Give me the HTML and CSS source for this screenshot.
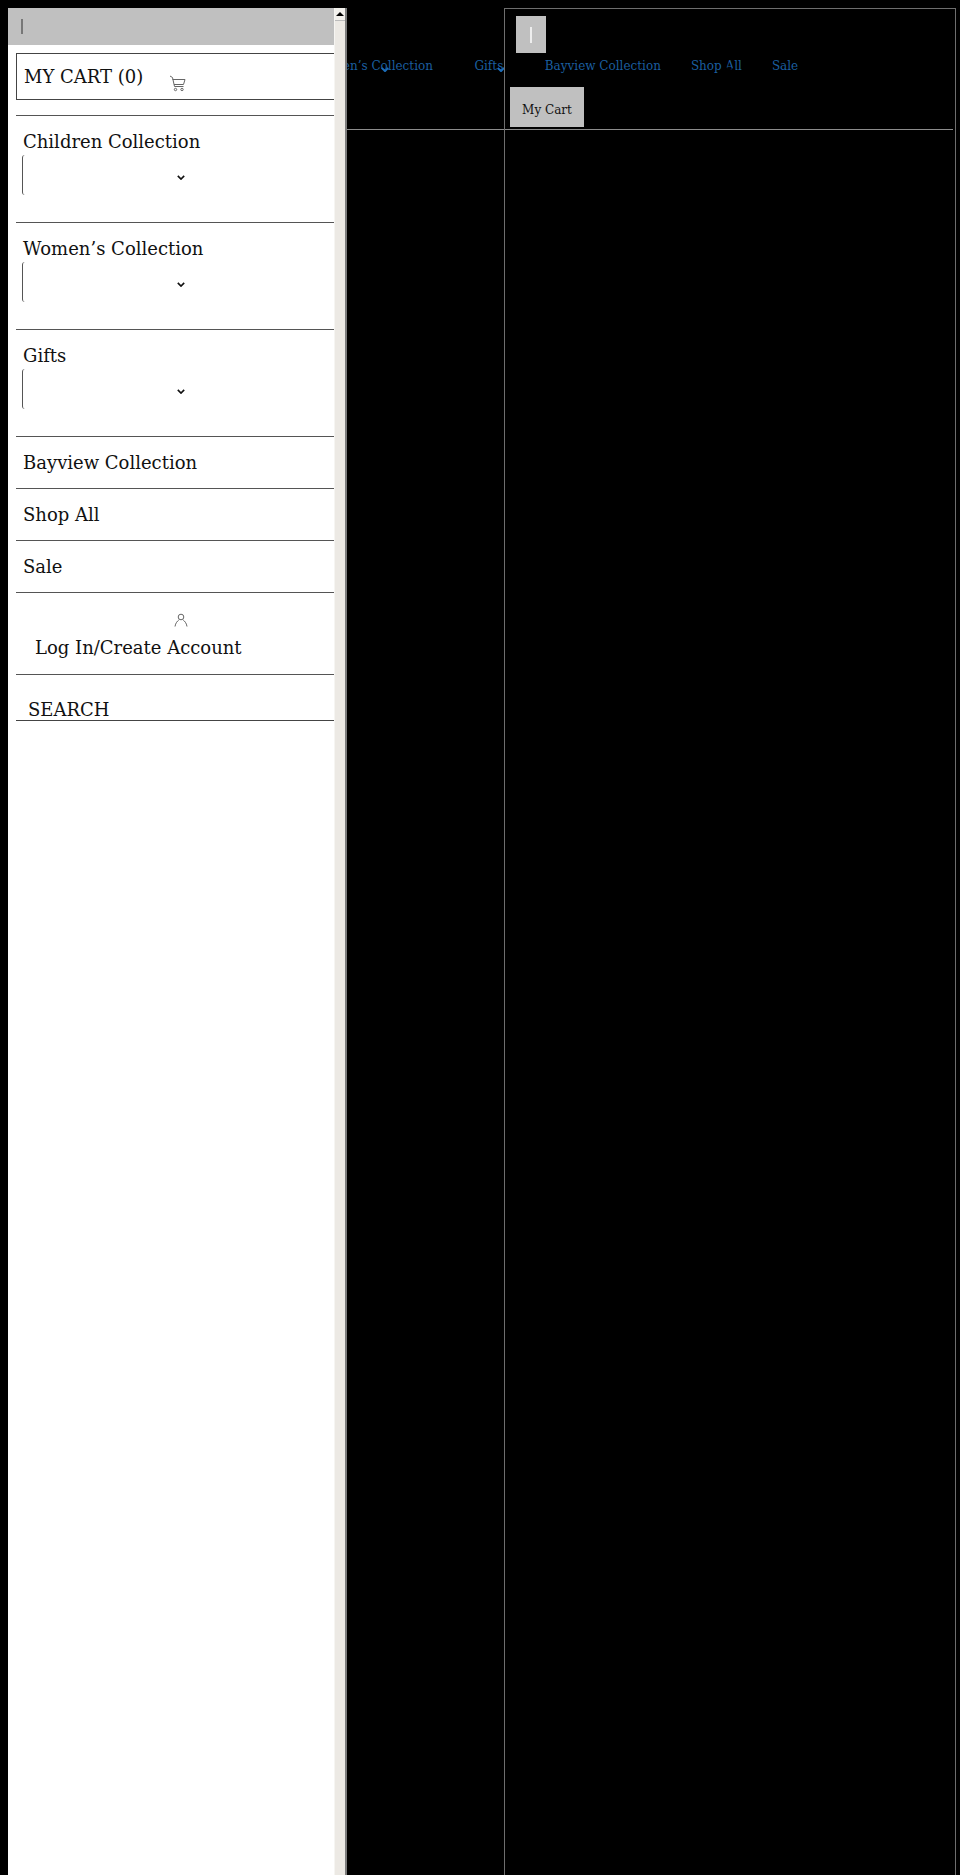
FILE: index.html
```html
<!DOCTYPE html>
<html lang="en">
<head>
  <meta charset="UTF-8">
  <meta name="viewport" content="width=device-width, initial-scale=1.0">
  <title>Shop</title>
  <link rel="stylesheet" href="styles.css">
</head>
<body>

  <header class="site-header">
    <button class="menu-toggle" type="button"><span class="toggle-bar"></span></button>
    <nav class="main-nav">
      <a class="nav-link has-sub" href="#">Children Collection<svg class="nav-chevron" viewBox="0 0 10 6"><path d="M1 1l4 4 4-4"/></svg></a>
      <a class="nav-link has-sub" href="#">Women’s Collection<svg class="nav-chevron" viewBox="0 0 10 6"><path d="M1 1l4 4 4-4"/></svg></a>
      <a class="nav-link has-sub" href="#">Gifts<svg class="nav-chevron" viewBox="0 0 10 6"><path d="M1 1l4 4 4-4"/></svg></a>
      <a class="nav-link" href="#">Bayview Collection</a>
      <a class="nav-link shop-all" href="#">Shop All<svg class="nav-chevron hidden-chevron" viewBox="0 0 10 6"><path d="M1 1l4 4 4-4"/></svg></a>
      <a class="nav-link" href="#">Sale</a>
    </nav>
    <button class="cart-button" type="button">My Cart</button>
  </header>

  <div class="frame"></div>

  <!-- Side drawer -->
  <aside class="drawer">
    <div class="drawer-content">
      <div class="drawer-top"><span class="top-bar"></span></div>

      <div class="drawer-cart">
        <span>MY CART (0)</span>
        <svg class="cart-icon" width="17" height="17" viewBox="0 0 17 17">
          <path d="M1 1l2.500 1.500 2 9h9"/>
          <path d="M3.500 4.500h12.500l-1.500 5h-9.500"/>
          <circle cx="6.500" cy="14.500" r="1.200"/>
          <circle cx="13" cy="14.500" r="1.200"/>
        </svg>
      </div>

      <ul class="drawer-menu">
        <li class="menu-item with-sub">
          <a href="#">Children Collection</a>
          <div class="sub-select"><svg class="sub-chevron" viewBox="0 0 10 6"><path d="M1 1l4 4 4-4"/></svg></div>
        </li>
        <li class="menu-item with-sub">
          <a href="#">Women’s Collection</a>
          <div class="sub-select"><svg class="sub-chevron" viewBox="0 0 10 6"><path d="M1 1l4 4 4-4"/></svg></div>
        </li>
        <li class="menu-item with-sub">
          <a href="#">Gifts</a>
          <div class="sub-select"><svg class="sub-chevron" viewBox="0 0 10 6"><path d="M1 1l4 4 4-4"/></svg></div>
        </li>
        <li class="menu-item"><a href="#">Bayview Collection</a></li>
        <li class="menu-item"><a href="#">Shop All</a></li>
        <li class="menu-item"><a href="#">Sale</a></li>
        <li class="menu-item account">
          <svg class="user-icon" width="14" height="14" viewBox="0 0 14 14">
            <circle cx="7" cy="4" r="2.800"/>
            <path d="M1 13.500c.5-3.500 2.500-5.500 3.800-6.500M13 13.500c-.5-3.500-2.500-5.500-3.800-6.500"/>
          </svg>
          <a href="#">Log In/Create Account</a>
        </li>
        <li class="menu-item search"><a href="#">SEARCH</a></li>
      </ul>
    </div>

    <div class="scrollbar">
      <div class="scroll-up"><span class="scroll-arrow"></span></div>
    </div>
  </aside>

</body>
</html>
```

FILE: styles.css
```css
* {
  box-sizing: border-box;
}

html, body {
  height: 100%;
}

body {
  margin: 0;
  padding: 8px;
  position: relative;
  background: #000;
  color: #111;
  font-family: "DejaVu Serif", serif;
  overflow: hidden;
}

a {
  color: inherit;
  text-decoration: none;
}

/* Header behind the drawer */
.site-header {
  height: 122px;
  margin-right: -1px;
  padding-top: 8px;
  border-bottom: 1px solid #8c8c8c;
}

.menu-toggle {
  display: flex;
  justify-content: center;
  align-items: center;
  width: 30px;
  height: 37px;
  margin-left: 508px;
  padding: 0;
  border: none;
  background: #c0c0c0;
}

.toggle-bar {
  display: block;
  width: 2px;
  height: 16px;
  background: #eee;
}

.main-nav {
  display: flex;
  height: 34px;
  padding-bottom: 8px;
  align-items: center;
  margin-left: 145px;
  white-space: nowrap;
}

.nav-link {
  position: relative;
  margin-right: 30px;
  color: #1b5e9f;
  font-size: 12px;
}

.nav-link.has-sub {
  margin-right: 41.500px;
}

.nav-chevron {
  position: absolute;
  top: 8px;
  left: calc(50% + 8px);
  width: 8px;
  height: 5px;
  fill: none;
  stroke: #1b6cb8;
  stroke-width: 2.500;
}

.hidden-chevron {
  top: 8px;
  left: calc(50% + 6px);
  width: 16px;
  height: 7px;
  stroke: #000;
}

.cart-button {
  display: block;
  width: 74px;
  height: 40px;
  margin-left: 502px;
  padding: 5px 0 0;
  border: none;
  background: #c0c0c0;
  color: #111;
  font-family: inherit;
  font-size: 12px;
}

.frame {
  position: absolute;
  top: 8px;
  left: 504px;
  right: 4px;
  bottom: -4px;
  border: 1px solid #6e6e6e;
  border-bottom: none;
}

/* Drawer */
.drawer {
  position: absolute;
  top: 8px;
  left: 8px;
  bottom: 0;
  display: flex;
  width: 339px;
  background: #fff;
  border-right: 2px solid #7d7d7d;
}

.drawer-content {
  width: 326px;
}

.drawer-top {
  height: 37px;
  padding: 11px 0 0 13px;
  background: #c0c0c0;
}

.top-bar {
  display: block;
  width: 2px;
  height: 15px;
  background: #777;
}

.drawer-cart {
  display: flex;
  height: 47px;
  margin: 8px 0 0 8px;
  padding: 12px 0 0 7px;
  border: 1px solid #444;
  border-right: none;
  font-size: 18px;
}

.cart-icon {
  margin: 9px 0 0 26px;
  fill: none;
  stroke: #666;
  stroke-width: 1;
}

.drawer-menu {
  margin: 15px 0 0 8px;
  padding: 0;
  list-style: none;
  font-size: 18px;
}

.menu-item {
  height: 52px;
  padding: 14px 0 0 7px;
  border-top: 1px solid #555;
  line-height: 24px;
}

.menu-item.with-sub {
  height: 107px;
}

.sub-select {
  display: flex;
  align-items: center;
  justify-content: center;
  width: 318px;
  height: 40px;
  margin: 1px 0 0 -1px;
  padding: 5px 1px 0 0;
  border-left: 1px solid #555;
  border-radius: 3px 0 0 3px;
}

.sub-chevron {
  width: 8px;
  height: 5px;
  fill: none;
  stroke: #111;
  stroke-width: 2;
}

.menu-item.account {
  height: 82px;
  padding: 20px 0 0 19px;
}

.user-icon {
  display: block;
  margin: 0 0 9px 139px;
  fill: none;
  stroke: #666;
  stroke-width: 1;
}

.menu-item.search {
  height: 47px;
  padding: 24px 0 0 12px;
  border-bottom: 1px solid #444;
  line-height: 22px;
}

/* Scrollbar */
.scrollbar {
  width: 12px;
  background: #ece9e4;
  border-left: 1px solid #f6f5f2;
}

.scroll-up {
  display: flex;
  height: 13px;
  align-items: center;
  justify-content: center;
  background: #f2f0ec;
  border-bottom: 1px solid #bbb;
}

.scroll-arrow {
  width: 0;
  height: 0;
  border-left: 4px solid transparent;
  border-right: 4px solid transparent;
  border-bottom: 4px solid #000;
}
```
